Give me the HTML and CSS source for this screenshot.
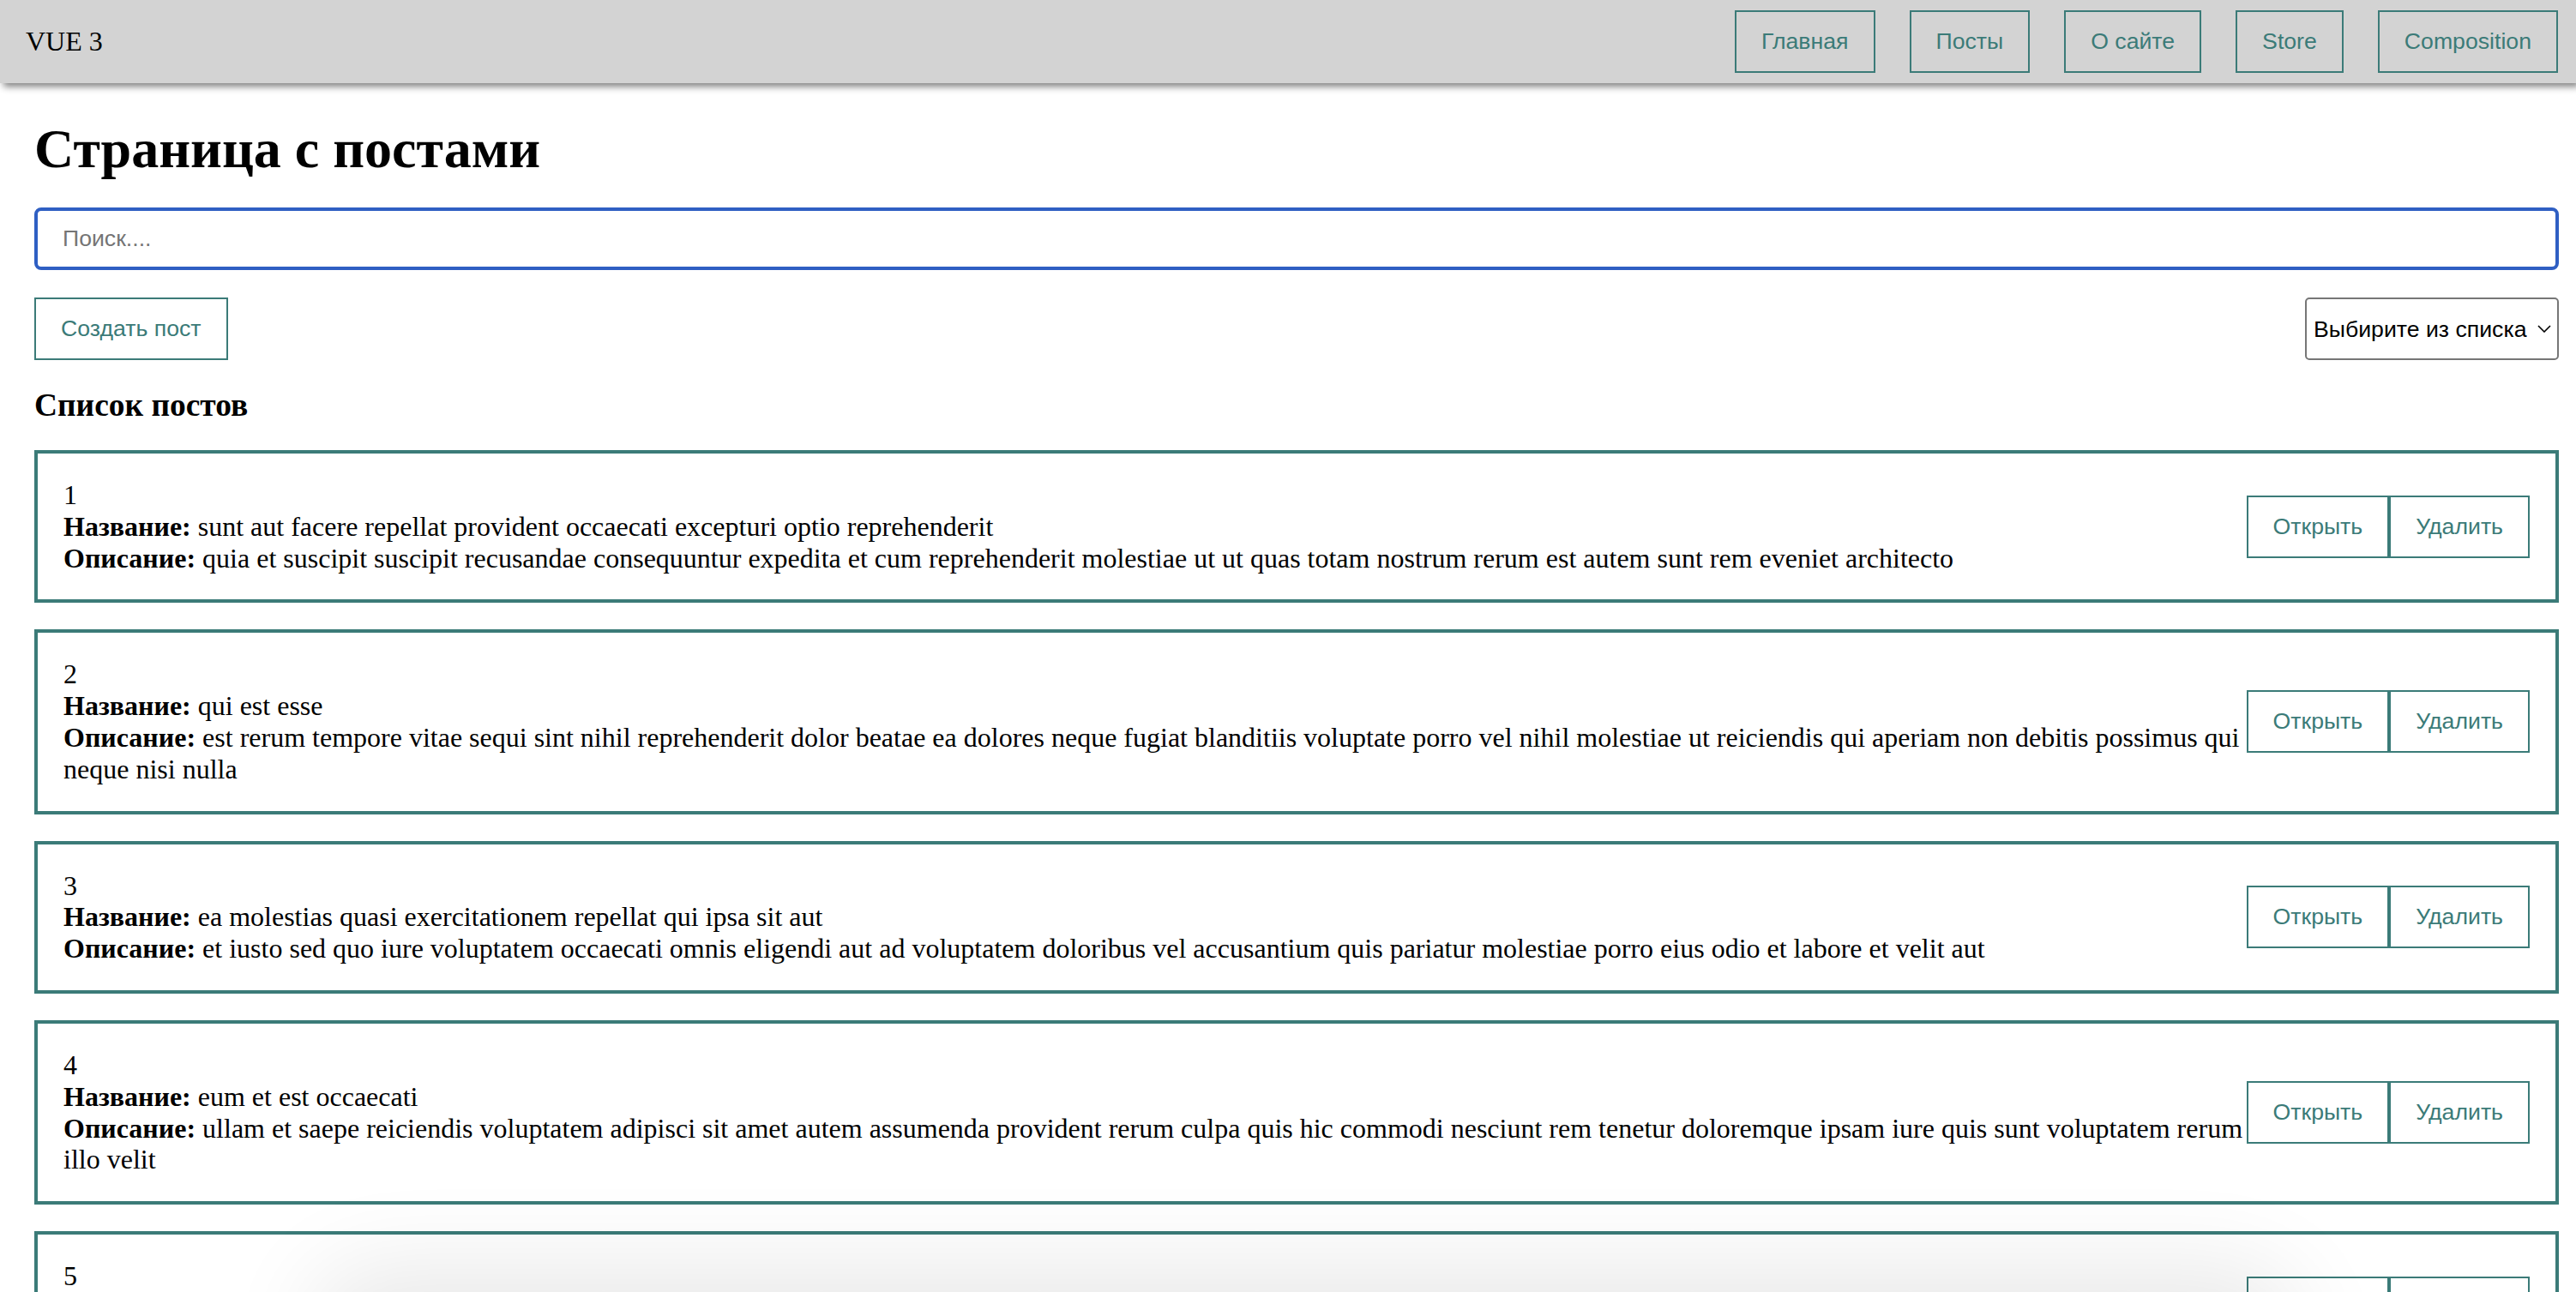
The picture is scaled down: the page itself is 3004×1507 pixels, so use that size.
FILE: index.html
```html
<!DOCTYPE html>
<html lang="ru">
<head>
<meta charset="utf-8">
<title>VUE 3</title>
<link rel="stylesheet" href="styles.css">
</head>
<body>
<nav class="navbar">
  <div class="navbar__logo">VUE 3</div>
  <div class="navbar__btns">
    <button class="btn">Главная</button>
    <button class="btn">Посты</button>
    <button class="btn">О сайте</button>
    <button class="btn">Store</button>
    <button class="btn">Composition</button>
  </div>
</nav>
<main class="app">
  <h1 class="title">Страница с постами</h1>
  <input class="search" type="text" placeholder="Поиск....">
  <div class="toolbar">
    <button class="btn">Создать пост</button>
    <label class="select">
      <select>
        <option>Выбирите из списка</option>
        <option>По названию</option>
        <option>По описанию</option>
      </select>
      <svg class="select__chevron" width="16" height="9" viewBox="0 0 16 9"><polyline points="1,1 8,8 15,1" fill="none" stroke="#000" stroke-width="1.6"/></svg>
    </label>
  </div>
  <h3 class="list-title">Список постов</h3>
  <div class="post-list">
    <div class="post">
      <div class="post__content">
        <div>1</div>
        <div><strong>Название:</strong> sunt aut facere repellat provident occaecati excepturi optio reprehenderit</div>
        <div><strong>Описание:</strong> quia et suscipit suscipit recusandae consequuntur expedita et cum reprehenderit molestiae ut ut quas totam nostrum rerum est autem sunt rem eveniet architecto</div>
      </div>
      <div class="post__btns">
        <button class="btn">Открыть</button>
        <button class="btn">Удалить</button>
      </div>
    </div>
    <div class="post">
      <div class="post__content">
        <div>2</div>
        <div><strong>Название:</strong> qui est esse</div>
        <div><strong>Описание:</strong> est rerum tempore vitae sequi sint nihil reprehenderit dolor beatae ea dolores neque fugiat blanditiis voluptate porro vel nihil molestiae ut reiciendis qui aperiam non debitis possimus qui neque nisi nulla</div>
      </div>
      <div class="post__btns">
        <button class="btn">Открыть</button>
        <button class="btn">Удалить</button>
      </div>
    </div>
    <div class="post">
      <div class="post__content">
        <div>3</div>
        <div><strong>Название:</strong> ea molestias quasi exercitationem repellat qui ipsa sit aut</div>
        <div><strong>Описание:</strong> et iusto sed quo iure voluptatem occaecati omnis eligendi aut ad voluptatem doloribus vel accusantium quis pariatur molestiae porro eius odio et labore et velit aut</div>
      </div>
      <div class="post__btns">
        <button class="btn">Открыть</button>
        <button class="btn">Удалить</button>
      </div>
    </div>
    <div class="post">
      <div class="post__content">
        <div>4</div>
        <div><strong>Название:</strong> eum et est occaecati</div>
        <div><strong>Описание:</strong> ullam et saepe reiciendis voluptatem adipisci sit amet autem assumenda provident rerum culpa quis hic commodi nesciunt rem tenetur doloremque ipsam iure quis sunt voluptatem rerum illo velit</div>
      </div>
      <div class="post__btns">
        <button class="btn">Открыть</button>
        <button class="btn">Удалить</button>
      </div>
    </div>
    <div class="post">
      <div class="post__content">
        <div>5</div>
        <div><strong>Название:</strong> nesciunt quas odio</div>
        <div><strong>Описание:</strong> repudiandae veniam quaerat sunt sed alias aut fugiat sit autem sed est voluptatem omnis possimus esse voluptatibus quis est aut tenetur dolor neque</div>
      </div>
      <div class="post__btns">
        <button class="btn">Открыть</button>
        <button class="btn">Удалить</button>
      </div>
    </div>
  </div>
</main>
<div class="shade"></div>
</body>
</html>
```
FILE: styles.css
```css
* {
  margin: 0;
  padding: 0;
  box-sizing: border-box;
}

body {
  font-family: "Liberation Serif", "Times New Roman", serif;
  font-size: 32px;
  color: #000;
  background: #fff;
}

.navbar {
  height: 97px;
  background: #d3d3d3;
  box-shadow: 4px 4px 8px #808080;
  display: flex;
  align-items: center;
  padding: 0 21px 0 30px;
  position: relative;
  z-index: 2;
}

.navbar__logo {
  font-size: 32px;
}

.navbar__btns {
  margin-left: auto;
  display: flex;
  gap: 40px;
}

.btn {
  font-family: "Liberation Sans", Arial, sans-serif;
  font-size: 26.67px;
  line-height: 29px;
  padding: 20px 29px;
  border: 2px solid #3b7b78;
  color: #3b7b78;
  background: none;
  white-space: nowrap;
}

.app {
  padding: 40px 20px 40px 40px;
}

.title {
  font-size: 64px;
  line-height: 74px;
  font-weight: bold;
}

.search {
  display: block;
  width: 100%;
  height: 73px;
  margin-top: 31px;
  border: 4px solid #2f5fc3;
  border-radius: 8px;
  padding: 0 28px 0 29px;
  font-family: "Liberation Sans", Arial, sans-serif;
  font-size: 26.67px;
  color: #000;
  outline: none;
}

.search::placeholder {
  color: #757575;
}

.toolbar {
  display: flex;
  justify-content: space-between;
  align-items: center;
  margin: 32px 0 31px;
}

.select {
  display: flex;
  align-items: center;
  height: 73px;
  border: 2px solid #767676;
  border-radius: 5px;
  padding: 0 7px 0 8px;
  gap: 12px;
  background: #fff;
}

.select select {
  appearance: none;
  -webkit-appearance: none;
  border: none;
  background: none;
  outline: none;
  font-family: "Liberation Sans", Arial, sans-serif;
  font-size: 26.67px;
  color: #000;
}

.select__chevron {
  display: block;
  flex-shrink: 0;
}

.list-title {
  font-size: 37.44px;
  line-height: 43px;
  font-weight: bold;
}

.post {
  display: flex;
  align-items: center;
  justify-content: space-between;
  border: 4px solid #3b7b78;
  padding: 30px;
  margin-top: 31px;
  line-height: 36.8px;
}

.post__content {
  min-width: 0;
}

.post__btns {
  display: flex;
  flex-shrink: 0;
}

.shade {
  position: fixed;
  left: 380px;
  right: 340px;
  bottom: -120px;
  height: 120px;
  border-radius: 80px;
  box-shadow: 0 -10px 110px 20px rgba(0, 0, 0, 0.09);
  pointer-events: none;
  z-index: 3;
}
```
